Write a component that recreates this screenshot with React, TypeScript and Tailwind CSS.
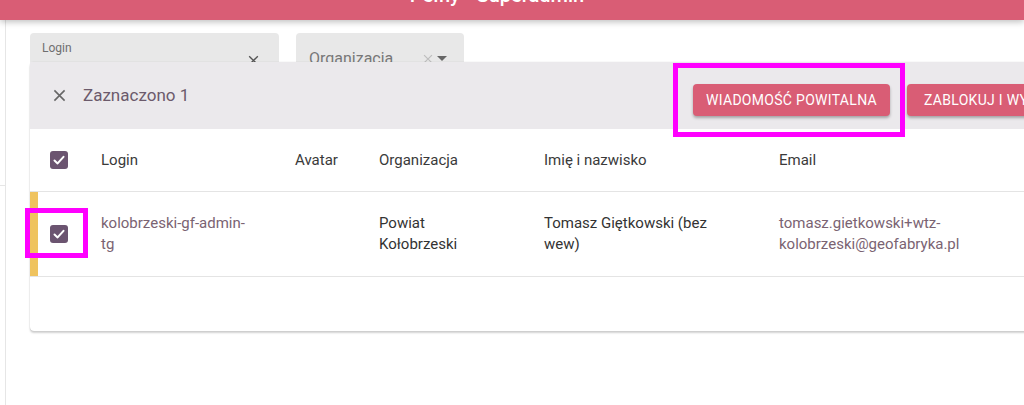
import React from 'react';

const XIcon = ({ className }: { className?: string }) => (
  <svg viewBox="0 0 14 14" className={className} fill="none" stroke="currentColor" strokeWidth="1.7">
    <path d="M1.5 1.5 L12.5 12.5 M12.5 1.5 L1.5 12.5" />
  </svg>
);

const Checkbox = () => (
  <div className="w-[18px] h-[18px] rounded-[3px] bg-[#6b5470] flex items-center justify-center">
    <svg viewBox="0 0 18 18" className="w-[18px] h-[18px]" fill="none" stroke="white" strokeWidth="2" strokeLinecap="round" strokeLinejoin="round">
      <path d="M4.5 9.5 L7.6 12.4 L13.5 5.8" />
    </svg>
  </div>
);

const cols = 'grid grid-cols-[57px_194px_84px_165px_235px_1fr]';

export default function App() {
  return (
    <div className="relative w-[1024px] h-[405px] overflow-hidden bg-white font-['Roboto',sans-serif]">
      {/* Top bar */}
      <header className="relative z-20 h-[20px] bg-[#d95d75] overflow-hidden flex shadow-[0_2px_6px_rgba(0,0,0,0.25)]">
        <span className="text-white text-[20px] leading-[20px] font-medium -mt-[15px] pl-[398px] whitespace-nowrap">
          - Pełny - Superadmin
        </span>
      </header>

      <div className="flex">
        {/* Sidebar edge */}
        <aside className="w-[6px] h-[385px] border-r border-[#e6e6e6]">
          <div className="h-[166px] border-b border-[#e6e6e6]" />
        </aside>

        <main className="flex-1 min-w-0 pl-[24px] pt-[13px]">
          {/* Filters */}
          <div className="h-[29px] flex items-start gap-[17px]">
            <div className="relative w-[249px] h-[56px] shrink-0 bg-[#e8e8e8] rounded-t-[4px] px-[12px] pt-[8px]">
              <div className="text-[12px] leading-[14px] text-[#6f6f6f]">Login</div>
              <div className="mt-[5px] text-[16px] leading-[19px] text-[#333]">kolobrzeski-gf-admin-tg</div>
              <XIcon className="absolute right-[20px] top-[22px] w-[11px] h-[11px] text-[#555]" />
            </div>
            <div className="relative w-[168px] h-[56px] shrink-0 bg-[#e8e8e8] rounded-t-[4px] pl-[13px] pt-[16px]">
              <div className="text-[16px] leading-[19px] text-[#777]">Organizacja</div>
              <XIcon className="absolute right-[31px] top-[21px] w-[10px] h-[10px] text-[#bdbdbd]" />
              <div className="absolute right-[17px] top-[23px] w-0 h-0 border-l-[5px] border-r-[5px] border-t-[5px] border-l-transparent border-r-transparent border-t-[#666]" />
            </div>
          </div>

          {/* Table card */}
          <div className="relative z-10 w-[1150px] bg-white rounded-[4px] shadow-[0_2px_2px_rgba(0,0,0,0.18),0_0_1px_rgba(0,0,0,0.25)]">
            {/* Selection toolbar */}
            <div className="h-[67px] bg-[#ebe9ec] flex">
              <div className="w-[663px] flex items-center pl-[23px] gap-[17px]">
                <XIcon className="w-[13px] h-[13px] text-[#666]" />
                <span className="text-[17px] text-[#6b5a6b]">Zaznaczono 1</span>
              </div>
              <div className="flex items-start gap-[17px] pt-[22px]">
                <button className="h-[32px] w-[197px] rounded-[4px] bg-[#d95d75] text-white text-[14px] font-normal tracking-[0.3px] shadow-[0_2px_3px_rgba(0,0,0,0.3)] whitespace-nowrap">
                  WIADOMOŚĆ POWITALNA
                </button>
                <button className="h-[32px] px-[17px] rounded-[4px] bg-[#d95d75] text-white text-[14px] font-normal tracking-[0.3px] shadow-[0_2px_3px_rgba(0,0,0,0.3)] whitespace-nowrap">
                  ZABLOKUJ I WYŚLIJ ZAPROSZENIE
                </button>
              </div>
            </div>

            {/* Header row */}
            <div className={`${cols} h-[63px] border-b border-[#e4e4e4] items-center text-[15px] text-[#3a3a3a]`}>
              <div className="pl-[20px]"><Checkbox /></div>
              <div className="pl-[14px]">Login</div>
              <div className="pl-[14px]">Avatar</div>
              <div className="pl-[14px]">Organizacja</div>
              <div className="pl-[14px]">Imię i nazwisko</div>
              <div className="pl-[14px]">Email</div>
            </div>

            {/* Data row */}
            <div className={`${cols} h-[85px] border-b border-[#e4e4e4] text-[15px] leading-[21px]`}>
              <div className="border-l-[8px] border-[#efc35f] pl-[12px] flex items-center"><Checkbox /></div>
              <div className="pl-[14px] flex items-center">
                <span className="w-[150px] text-[#7a6372]">kolobrzeski-gf-admin-tg</span>
              </div>
              <div />
              <div className="pl-[14px] flex items-center">
                <span className="w-[110px] text-[#333]">Powiat Kołobrzeski</span>
              </div>
              <div className="pl-[14px] flex items-center">
                <span className="w-[180px] text-[#333]">Tomasz Giętkowski (bez wew)</span>
              </div>
              <div className="pl-[14px] flex items-center">
                <span className="w-[200px] text-[#7a6372]">tomasz.gietkowski+wtz-kolobrzeski@geofabryka.pl</span>
              </div>
            </div>

            <div className="h-[54px]" />
          </div>
        </main>
      </div>

      {/* Annotation highlights */}
      <div className="absolute left-[673px] top-[63px] w-[232px] h-[74px] border-[5px] border-[#ff00ff] z-30" />
      <div className="absolute left-[25px] top-[208px] w-[63px] h-[50px] border-[5px] border-[#ff00ff] z-30" />
    </div>
  );
}
